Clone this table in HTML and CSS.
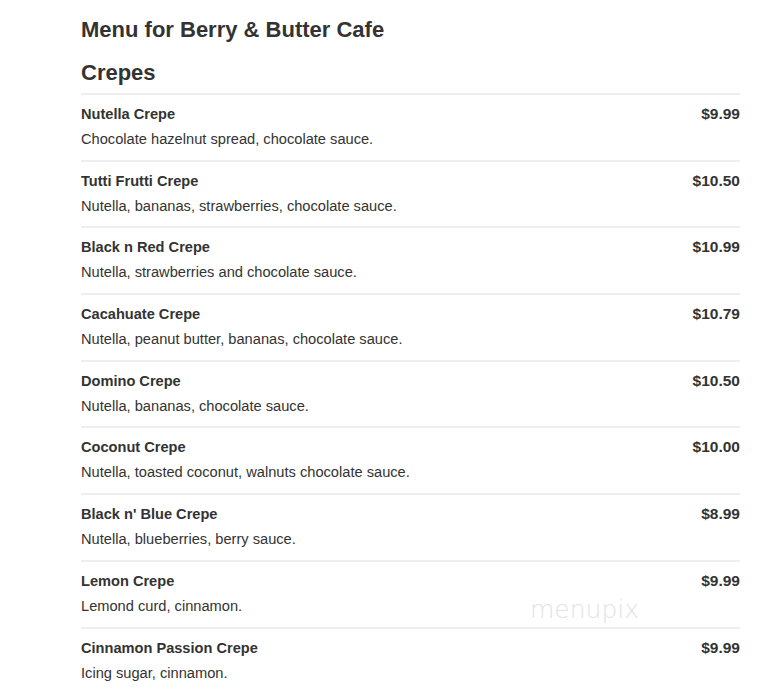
FILE: index.html
```html
<!DOCTYPE html>
<html>
<head>
<meta charset="utf-8">
<link rel="stylesheet" href="styles.css">
</head>
<body>
<div class="page">
  <h1 class="title">Menu for Berry &amp; Butter Cafe</h1>
  <h2 class="section">Crepes</h2>
  <div class="list">
    <div class="item"><div class="info"><div class="name">Nutella Crepe</div><div class="desc">Chocolate hazelnut spread, chocolate sauce.</div></div><div class="price">$9.99</div></div>
    <div class="item"><div class="info"><div class="name">Tutti Frutti Crepe</div><div class="desc">Nutella, bananas, strawberries, chocolate sauce.</div></div><div class="price">$10.50</div></div>
    <div class="item"><div class="info"><div class="name">Black n Red Crepe</div><div class="desc">Nutella, strawberries and chocolate sauce.</div></div><div class="price">$10.99</div></div>
    <div class="item"><div class="info"><div class="name">Cacahuate Crepe</div><div class="desc">Nutella, peanut butter, bananas, chocolate sauce.</div></div><div class="price">$10.79</div></div>
    <div class="item"><div class="info"><div class="name">Domino Crepe</div><div class="desc">Nutella, bananas, chocolate sauce.</div></div><div class="price">$10.50</div></div>
    <div class="item"><div class="info"><div class="name">Coconut Crepe</div><div class="desc">Nutella, toasted coconut, walnuts chocolate sauce.</div></div><div class="price">$10.00</div></div>
    <div class="item"><div class="info"><div class="name">Black n' Blue Crepe</div><div class="desc">Nutella, blueberries, berry sauce.</div></div><div class="price">$8.99</div></div>
    <div class="item"><div class="info"><div class="name">Lemon Crepe</div><div class="desc">Lemond curd, cinnamon.</div></div><div class="price">$9.99</div></div>
    <div class="item"><div class="info"><div class="name">Cinnamon Passion Crepe</div><div class="desc">Icing sugar, cinnamon.</div></div><div class="price">$9.99</div></div>
  </div>
  <div class="watermark">menupix</div>
</div>
</body>
</html>
```

FILE: styles.css
```css
html, body {
  margin: 0;
  padding: 0;
  background: #ffffff;
}
body {
  font-family: "Liberation Sans", Arial, sans-serif;
  color: #333333;
}
.page {
  position: relative;
  width: 659px;
  padding: 18px 0 0 81px;
  height: 676px;
  overflow: hidden;
}
.title {
  margin: 0;
  font-size: 22px;
  line-height: 24px;
  font-weight: bold;
  color: #333;
}
.section {
  margin: 19px 0 8px 0;
  font-size: 22px;
  line-height: 24px;
  font-weight: bold;
  color: #333;
}
.item {
  display: flex;
  justify-content: space-between;
  align-items: flex-start;
  border-top: 2px solid #eeeeee;
  padding: 9px 0 10.7px 0;
}
.name {
  font-size: 14.6px;
  line-height: 20px;
  font-weight: bold;
}
.desc {
  margin-top: 5px;
  font-size: 14.65px;
  line-height: 20px;
}
.price {
  font-size: 15.5px;
  line-height: 20px;
  font-weight: bold;
}
.watermark {
  position: absolute;
  left: 530px;
  top: 595px;
  font-family: "DejaVu Sans", sans-serif;
  font-weight: 200;
  font-size: 25px;
  color: #e2e2e2;
}
```
